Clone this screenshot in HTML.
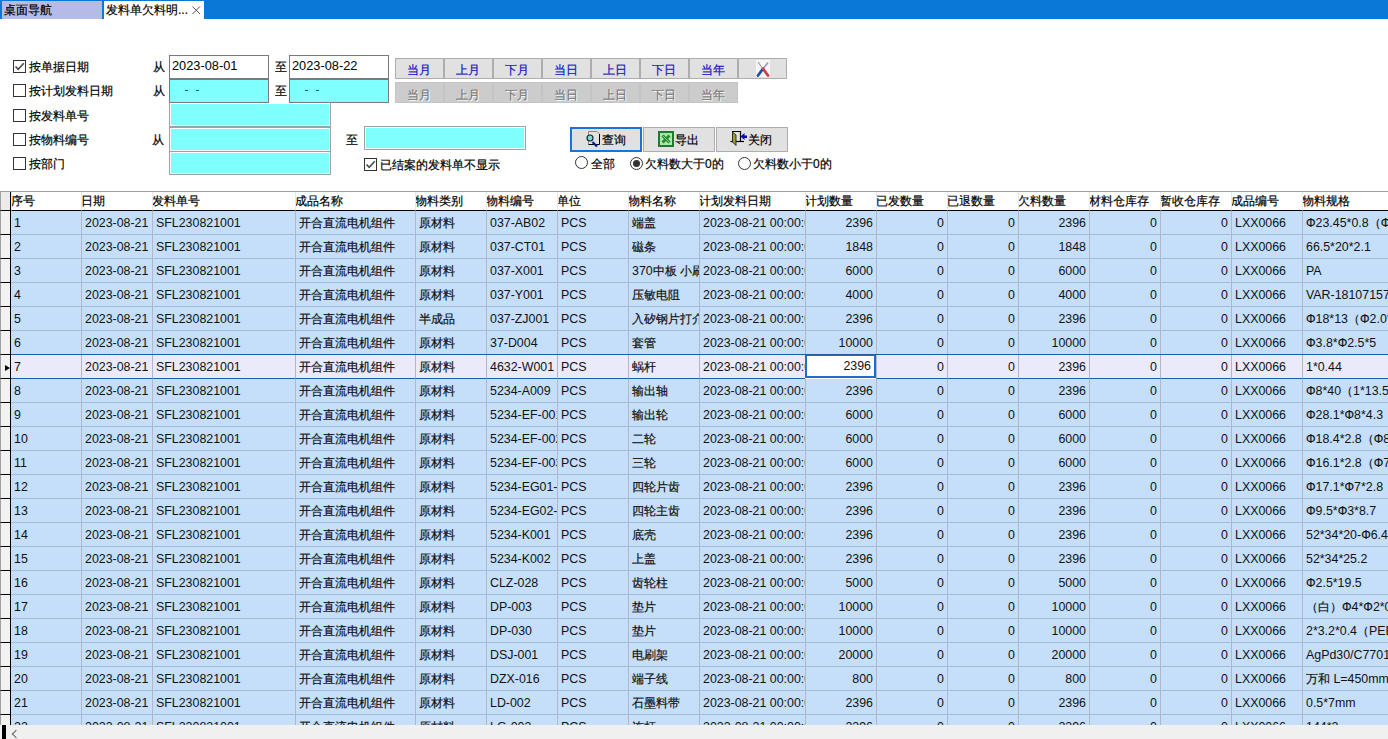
<!DOCTYPE html><html><head><meta charset="utf-8"><style>*{box-sizing:border-box;margin:0;padding:0}
html,body{width:1388px;height:739px;overflow:hidden;background:#fff;font-family:"Liberation Sans",sans-serif;font-size:12px;color:#000;-webkit-text-stroke-width:0.2px}
.abs{position:absolute}
#tabs{position:absolute;left:0;top:0;width:1388px;height:19px;background:#0a78d6}
.tab{position:absolute;top:1px;height:18px;line-height:18px;padding-left:2px;white-space:nowrap;font-size:12px}
#t1{left:2px;width:100px;background:#b3bbe6}
#t2{left:104px;width:100px;background:#fff}
.cb{position:absolute;width:13px;height:13px;border:1px solid #333;background:#fff}
.lbl{position:absolute;font-size:12px;line-height:14px;white-space:nowrap}
.inp{-webkit-text-stroke-width:0;position:absolute;border:1px solid #7a7a7a;background:#80ffff;font-size:12.8px;line-height:20px;padding-left:2px}
.dash{position:absolute;top:90px;width:3px;height:1px;background:#006868}
.inp.w{background:#fff}
.inp.l{border-color:#9aa4a8;box-shadow:inset 0 0 0 1px #f4ffff}
.btn{position:absolute;top:58px;width:49px;height:21px;background:#e1e1e1;border:1px solid #adadad;color:#1414c4;text-align:center;line-height:20px;font-size:12px;padding-top:1px;text-indent:-1px}
.btn.d{top:82px;background:#cccccc;border-color:#c4c4c4;color:#7a7a7a;text-shadow:1px 1px 0 #fff;padding-top:2px}
.bb{position:absolute;top:127px;height:25px;background:#e1e1e1;border:1px solid #adadad;font-size:12px}
.rad{position:absolute;width:13px;height:13px;border:1px solid #333;border-radius:50%;background:#fff}
#grid{position:absolute;left:0;top:191px;width:1388px;height:534px;overflow:hidden;border-top:1px solid #a0a0a0}
.cb svg{position:absolute;left:0;top:0}
.x{position:absolute;left:86px;top:0;font-size:15px;color:#444}
.ic{position:absolute}
.bt{position:absolute;line-height:14px;white-space:nowrap}
#grid{position:absolute;left:0;top:0;width:1388px;height:725px;overflow:hidden;border:0}
#gtop{position:absolute;left:0;top:191px;width:1388px;height:1px;background:#a0a0a0}
.ind{position:absolute;left:0;width:11px}
.hc{position:absolute;top:192px;height:19px;border-bottom:1px solid #000;border-left:1px solid #e8e8e8;background:#fff;padding-left:0;text-indent:-1px;line-height:18px;white-space:nowrap;overflow:hidden}
.row{position:absolute;left:0;width:1420px;height:24px}
.c{position:absolute;top:0;height:24px;border-left:1px solid #b0b8c8;border-bottom:1px solid #a5bacd;background:#c5dffa;padding-left:3px;padding-top:1px;line-height:23px;white-space:nowrap;overflow:hidden;font-size:12px;color:#111}
.a{font-size:12.4px;-webkit-text-stroke-width:0}
.c.r{text-align:right;padding-right:3px;padding-left:0}
.cur .c{background:#eaeafa;border-bottom-color:#1d5e9e}
.c.sel{background:#fff}
#hs{position:absolute;left:0;top:725px;width:1388px;height:14px;background:#f0f0f0}
#hs .bar{position:absolute;left:2px;top:0;width:4px;height:14px;background:#000}
.indh{position:absolute;left:0;top:192px;width:11px;height:19px;background:#ebebeb;border-left:1px solid #a0a0a0;border-right:1px solid #000;border-bottom:1px solid #000}
.indr{position:absolute;left:0;width:11px;height:24px;background:#f2f2f2;border-left:1px solid #a0a0a0;border-right:1px solid #000;border-bottom:1px solid #000}
.tri{position:absolute;left:4px;top:10px;width:0;height:0;border-top:3.5px solid transparent;border-bottom:3.5px solid transparent;border-left:5px solid #000}
.row .c:first-child{border-left:0}
.sel{border:2px solid #1a6fd0 !important;padding-top:0;padding-right:1px;line-height:20px;top:-1px;height:24px}
.curtop{position:absolute;left:11px;top:-1px;width:1409px;height:1px;background:#1d5e9e}
#hs .arr{position:absolute;left:13px;top:6px;width:6px;height:6px;border-left:1.6px solid #606060;border-bottom:1.6px solid #606060;transform:rotate(45deg);transform-origin:center}
</style></head><body>
<div id="tabs"><div class="tab" id="t1">桌面导航</div><div class="tab" id="t2">发料单欠料明...<svg style="position:absolute;left:88px;top:5px" width="10" height="10" viewBox="0 0 10 10"><path d="M0.5 0.5 L8 8 M8 0.5 L0.5 8" stroke="#555" stroke-width="1"/></svg></div></div>
<div class="cb" style="left:13px;top:60px"><svg width="11" height="11" viewBox="0 0 11 11"><path d="M1.5 5.5 L4.2 8.3 L9.8 2.2" fill="none" stroke="#4a4a4a" stroke-width="1.6"/></svg></div>
<div class="lbl" style="left:29px;top:60px">按单据日期</div>
<div class="cb" style="left:13px;top:84px"></div>
<div class="lbl" style="left:29px;top:84px">按计划发料日期</div>
<div class="cb" style="left:13px;top:109px"></div>
<div class="lbl" style="left:29px;top:109px">按发料单号</div>
<div class="cb" style="left:13px;top:133px"></div>
<div class="lbl" style="left:29px;top:133px">按物料编号</div>
<div class="cb" style="left:13px;top:157px"></div>
<div class="lbl" style="left:29px;top:157px">按部门</div>
<div class="lbl" style="left:153px;top:60px">从</div>
<div class="lbl" style="left:153px;top:84px">从</div>
<div class="lbl" style="left:152px;top:133px">从</div>
<div class="lbl" style="left:275px;top:60px">至</div>
<div class="lbl" style="left:275px;top:84px">至</div>
<div class="lbl" style="left:346px;top:133px">至</div>
<div class="inp w" style="left:169px;top:55px;width:100px;height:24px">2023-08-01</div>
<div class="inp w" style="left:289px;top:55px;width:100px;height:24px">2023-08-22</div>
<div class="inp" style="left:169px;top:79px;width:100px;height:24px"></div><div class="dash" style="left:185px"></div><div class="dash" style="left:196px"></div>
<div class="inp" style="left:289px;top:79px;width:100px;height:24px"></div><div class="dash" style="left:305px"></div><div class="dash" style="left:316px"></div>
<div class="inp l" style="left:169px;top:102px;width:162px;height:25px;border-top-color:transparent;background-clip:padding-box"></div>
<div class="inp l" style="left:169px;top:127px;width:162px;height:25px"></div>
<div class="inp l" style="left:364px;top:126px;width:162px;height:24px"></div>
<div class="inp l" style="left:169px;top:151px;width:162px;height:24px"></div>
<div class="btn" style="left:395px">当月</div>
<div class="btn" style="left:444px">上月</div>
<div class="btn" style="left:493px">下月</div>
<div class="btn" style="left:542px">当日</div>
<div class="btn" style="left:591px">上日</div>
<div class="btn" style="left:640px">下日</div>
<div class="btn" style="left:689px">当年</div>
<div class="btn" style="left:738px"><svg style="position:absolute;left:17px;top:0px" width="14" height="18" viewBox="0 0 14 18"><rect x="0" y="1" width="14" height="17" fill="#f6f6f6"/><path d="M2 3 L7 10" stroke="#a89098" stroke-width="1.1"/><path d="M12 3.5 L7 10" stroke="#a898c8" stroke-width="1.8"/><path d="M6.8 10 L2 16.5" stroke="#1a4fae" stroke-width="2.8" stroke-linecap="round"/><path d="M7.2 10 L12 16.5" stroke="#d03a4a" stroke-width="2.8" stroke-linecap="round"/></svg></div>
<div class="btn d" style="left:395px">当月</div>
<div class="btn d" style="left:444px">上月</div>
<div class="btn d" style="left:493px">下月</div>
<div class="btn d" style="left:542px">当日</div>
<div class="btn d" style="left:591px">上日</div>
<div class="btn d" style="left:640px">下日</div>
<div class="btn d" style="left:689px">当年</div>
<div class="bb" style="left:570px;width:72px;border:2px solid #1a73d6"><svg class="ic" style="left:14px;top:2px" width="16" height="18" viewBox="0 0 16 18"><path d="M2.5 13.5 V0.5 H11 L13.5 3" fill="none" stroke="#888" stroke-width="1"/><path d="M13.5 3 V13.5 H2.5" fill="none" stroke="#000" stroke-width="1"/><path d="M6.5 11 L11 15.5" stroke="#0a1a90" stroke-width="2.2"/><circle cx="4" cy="7" r="3" fill="#78dcc8" stroke="#123" stroke-width="1.1"/></svg><span class="bt" style="left:30px;top:4px">查询</span></div>
<div class="bb" style="left:643px;width:72px"><svg class="ic" style="left:14px;top:3px" width="17" height="17" viewBox="0 0 17 17"><rect x="1" y="1" width="14" height="14" fill="#a8e8a8" stroke="#1f7a2f" stroke-width="2"/><path d="M4.5 4.5 L11.5 11.5 M11.5 4.5 L4.5 11.5" stroke="#2a8a38" stroke-width="3"/><path d="M5 5 L11 11" stroke="#90e890" stroke-width="0.8"/></svg><span class="bt" style="left:31px;top:5px">导出</span></div>
<div class="bb" style="left:716px;width:72px"><svg class="ic" style="left:13px;top:2px" width="18" height="17" viewBox="0 0 18 17"><path d="M2 1.5 H10.5 V11.5" fill="none" stroke="#000" stroke-width="1.2"/><path d="M0.5 11.5 H14" stroke="#000" stroke-width="1.2"/><path d="M2.5 2 L6 5 V15.5 L2.5 12 Z" fill="#a09a30" stroke="#222" stroke-width="0.9"/><path d="M10.5 6.5 L14.5 3 V5.5 H17 V8 H14.5 V10 Z" fill="#0a10b0"/></svg><span class="bt" style="left:31px;top:5px">关闭</span></div>
<div class="rad" style="left:575px;top:156px"></div>
<div class="lbl" style="left:591px;top:157px">全部</div>
<div class="rad" style="left:630px;top:157px"><div style="position:absolute;left:2px;top:2px;width:7px;height:7px;border-radius:50%;background:#333"></div></div>
<div class="lbl" style="left:645px;top:157px">欠料数大于0的</div>
<div class="rad" style="left:738px;top:157px"></div>
<div class="lbl" style="left:753px;top:157px">欠料数小于0的</div>
<div class="cb" style="left:364px;top:158px"><svg width="11" height="11" viewBox="0 0 11 11"><path d="M1.5 5.5 L4.2 8.3 L9.8 2.2" fill="none" stroke="#4a4a4a" stroke-width="1.6"/></svg></div>
<div class="lbl" style="left:380px;top:158px">已结案的发料单不显示</div>

<div id="grid"><div id="gtop"></div><div class="indh"></div><div class="indr" style="top:211px"></div><div class="indr" style="top:235px"></div><div class="indr" style="top:259px"></div><div class="indr" style="top:283px"></div><div class="indr" style="top:307px"></div><div class="indr" style="top:331px"></div><div class="indr" style="top:355px"><div class="tri"></div></div><div class="indr" style="top:379px"></div><div class="indr" style="top:403px"></div><div class="indr" style="top:427px"></div><div class="indr" style="top:451px"></div><div class="indr" style="top:475px"></div><div class="indr" style="top:499px"></div><div class="indr" style="top:523px"></div><div class="indr" style="top:547px"></div><div class="indr" style="top:571px"></div><div class="indr" style="top:595px"></div><div class="indr" style="top:619px"></div><div class="indr" style="top:643px"></div><div class="indr" style="top:667px"></div><div class="indr" style="top:691px"></div><div class="indr" style="top:715px"></div><div class="hc" style="left:11px;width:70px">序号</div><div class="hc" style="left:81px;width:71px">日期</div><div class="hc" style="left:152px;width:143px">发料单号</div><div class="hc" style="left:295px;width:120px">成品名称</div><div class="hc" style="left:415px;width:71px">物料类别</div><div class="hc" style="left:486px;width:71px">物料编号</div><div class="hc" style="left:557px;width:71px">单位</div><div class="hc" style="left:628px;width:71px">物料名称</div><div class="hc" style="left:699px;width:106px">计划发料日期</div><div class="hc" style="left:805px;width:71px">计划数量</div><div class="hc" style="left:876px;width:71px">已发数量</div><div class="hc" style="left:947px;width:71px">已退数量</div><div class="hc" style="left:1018px;width:71px">欠料数量</div><div class="hc" style="left:1089px;width:71px">材料仓库存</div><div class="hc" style="left:1160px;width:71px">暂收仓库存</div><div class="hc" style="left:1231px;width:71px">成品编号</div><div class="hc" style="left:1302px;width:118px">物料规格</div><div class="row" style="top:211px"><div class="c" style="left:11px;width:70px"><span class="a">1</span></div><div class="c" style="left:81px;width:71px"><span class="a">2023-08-21</span></div><div class="c" style="left:152px;width:143px"><span class="a">SFL230821001</span></div><div class="c" style="left:295px;width:120px">开合直流电机组件</div><div class="c" style="left:415px;width:71px">原材料</div><div class="c" style="left:486px;width:71px"><span class="a">037-AB02</span></div><div class="c" style="left:557px;width:71px"><span class="a">PCS</span></div><div class="c" style="left:628px;width:71px">端盖</div><div class="c" style="left:699px;width:106px"><span class="a">2023-08-21 00:00:00</span></div><div class="c r" style="left:805px;width:71px"><span class="a">2396</span></div><div class="c r" style="left:876px;width:71px"><span class="a">0</span></div><div class="c r" style="left:947px;width:71px"><span class="a">0</span></div><div class="c r" style="left:1018px;width:71px"><span class="a">2396</span></div><div class="c r" style="left:1089px;width:71px"><span class="a">0</span></div><div class="c r" style="left:1160px;width:71px"><span class="a">0</span></div><div class="c" style="left:1231px;width:71px"><span class="a">LXX0066</span></div><div class="c" style="left:1302px;width:118px">Φ<span class="a">23.45*0.8</span>（Φ<span class="a">23.45*0.8</span>）</div></div><div class="row" style="top:235px"><div class="c" style="left:11px;width:70px"><span class="a">2</span></div><div class="c" style="left:81px;width:71px"><span class="a">2023-08-21</span></div><div class="c" style="left:152px;width:143px"><span class="a">SFL230821001</span></div><div class="c" style="left:295px;width:120px">开合直流电机组件</div><div class="c" style="left:415px;width:71px">原材料</div><div class="c" style="left:486px;width:71px"><span class="a">037-CT01</span></div><div class="c" style="left:557px;width:71px"><span class="a">PCS</span></div><div class="c" style="left:628px;width:71px">磁条</div><div class="c" style="left:699px;width:106px"><span class="a">2023-08-21 00:00:00</span></div><div class="c r" style="left:805px;width:71px"><span class="a">1848</span></div><div class="c r" style="left:876px;width:71px"><span class="a">0</span></div><div class="c r" style="left:947px;width:71px"><span class="a">0</span></div><div class="c r" style="left:1018px;width:71px"><span class="a">1848</span></div><div class="c r" style="left:1089px;width:71px"><span class="a">0</span></div><div class="c r" style="left:1160px;width:71px"><span class="a">0</span></div><div class="c" style="left:1231px;width:71px"><span class="a">LXX0066</span></div><div class="c" style="left:1302px;width:118px"><span class="a">66.5*20*2.1</span></div></div><div class="row" style="top:259px"><div class="c" style="left:11px;width:70px"><span class="a">3</span></div><div class="c" style="left:81px;width:71px"><span class="a">2023-08-21</span></div><div class="c" style="left:152px;width:143px"><span class="a">SFL230821001</span></div><div class="c" style="left:295px;width:120px">开合直流电机组件</div><div class="c" style="left:415px;width:71px">原材料</div><div class="c" style="left:486px;width:71px"><span class="a">037-X001</span></div><div class="c" style="left:557px;width:71px"><span class="a">PCS</span></div><div class="c" style="left:628px;width:71px"><span class="a">370</span>中板<span class="a"> </span>小刷架</div><div class="c" style="left:699px;width:106px"><span class="a">2023-08-21 00:00:00</span></div><div class="c r" style="left:805px;width:71px"><span class="a">6000</span></div><div class="c r" style="left:876px;width:71px"><span class="a">0</span></div><div class="c r" style="left:947px;width:71px"><span class="a">0</span></div><div class="c r" style="left:1018px;width:71px"><span class="a">6000</span></div><div class="c r" style="left:1089px;width:71px"><span class="a">0</span></div><div class="c r" style="left:1160px;width:71px"><span class="a">0</span></div><div class="c" style="left:1231px;width:71px"><span class="a">LXX0066</span></div><div class="c" style="left:1302px;width:118px"><span class="a">PA</span></div></div><div class="row" style="top:283px"><div class="c" style="left:11px;width:70px"><span class="a">4</span></div><div class="c" style="left:81px;width:71px"><span class="a">2023-08-21</span></div><div class="c" style="left:152px;width:143px"><span class="a">SFL230821001</span></div><div class="c" style="left:295px;width:120px">开合直流电机组件</div><div class="c" style="left:415px;width:71px">原材料</div><div class="c" style="left:486px;width:71px"><span class="a">037-Y001</span></div><div class="c" style="left:557px;width:71px"><span class="a">PCS</span></div><div class="c" style="left:628px;width:71px">压敏电阻</div><div class="c" style="left:699px;width:106px"><span class="a">2023-08-21 00:00:00</span></div><div class="c r" style="left:805px;width:71px"><span class="a">4000</span></div><div class="c r" style="left:876px;width:71px"><span class="a">0</span></div><div class="c r" style="left:947px;width:71px"><span class="a">0</span></div><div class="c r" style="left:1018px;width:71px"><span class="a">4000</span></div><div class="c r" style="left:1089px;width:71px"><span class="a">0</span></div><div class="c r" style="left:1160px;width:71px"><span class="a">0</span></div><div class="c" style="left:1231px;width:71px"><span class="a">LXX0066</span></div><div class="c" style="left:1302px;width:118px"><span class="a">VAR-18107157</span></div></div><div class="row" style="top:307px"><div class="c" style="left:11px;width:70px"><span class="a">5</span></div><div class="c" style="left:81px;width:71px"><span class="a">2023-08-21</span></div><div class="c" style="left:152px;width:143px"><span class="a">SFL230821001</span></div><div class="c" style="left:295px;width:120px">开合直流电机组件</div><div class="c" style="left:415px;width:71px">半成品</div><div class="c" style="left:486px;width:71px"><span class="a">037-ZJ001</span></div><div class="c" style="left:557px;width:71px"><span class="a">PCS</span></div><div class="c" style="left:628px;width:71px">入矽钢片打介子</div><div class="c" style="left:699px;width:106px"><span class="a">2023-08-21 00:00:00</span></div><div class="c r" style="left:805px;width:71px"><span class="a">2396</span></div><div class="c r" style="left:876px;width:71px"><span class="a">0</span></div><div class="c r" style="left:947px;width:71px"><span class="a">0</span></div><div class="c r" style="left:1018px;width:71px"><span class="a">2396</span></div><div class="c r" style="left:1089px;width:71px"><span class="a">0</span></div><div class="c r" style="left:1160px;width:71px"><span class="a">0</span></div><div class="c" style="left:1231px;width:71px"><span class="a">LXX0066</span></div><div class="c" style="left:1302px;width:118px">Φ<span class="a">18*13</span>（Φ<span class="a">2.0*4</span>）</div></div><div class="row" style="top:331px"><div class="c" style="left:11px;width:70px"><span class="a">6</span></div><div class="c" style="left:81px;width:71px"><span class="a">2023-08-21</span></div><div class="c" style="left:152px;width:143px"><span class="a">SFL230821001</span></div><div class="c" style="left:295px;width:120px">开合直流电机组件</div><div class="c" style="left:415px;width:71px">原材料</div><div class="c" style="left:486px;width:71px"><span class="a">37-D004</span></div><div class="c" style="left:557px;width:71px"><span class="a">PCS</span></div><div class="c" style="left:628px;width:71px">套管</div><div class="c" style="left:699px;width:106px"><span class="a">2023-08-21 00:00:00</span></div><div class="c r" style="left:805px;width:71px"><span class="a">10000</span></div><div class="c r" style="left:876px;width:71px"><span class="a">0</span></div><div class="c r" style="left:947px;width:71px"><span class="a">0</span></div><div class="c r" style="left:1018px;width:71px"><span class="a">10000</span></div><div class="c r" style="left:1089px;width:71px"><span class="a">0</span></div><div class="c r" style="left:1160px;width:71px"><span class="a">0</span></div><div class="c" style="left:1231px;width:71px"><span class="a">LXX0066</span></div><div class="c" style="left:1302px;width:118px">Φ<span class="a">3.8*</span>Φ<span class="a">2.5*5</span></div></div><div class="row cur" style="top:355px"><div class="c" style="left:11px;width:70px"><span class="a">7</span></div><div class="c" style="left:81px;width:71px"><span class="a">2023-08-21</span></div><div class="c" style="left:152px;width:143px"><span class="a">SFL230821001</span></div><div class="c" style="left:295px;width:120px">开合直流电机组件</div><div class="c" style="left:415px;width:71px">原材料</div><div class="c" style="left:486px;width:71px"><span class="a">4632-W001</span></div><div class="c" style="left:557px;width:71px"><span class="a">PCS</span></div><div class="c" style="left:628px;width:71px">蜗杆</div><div class="c" style="left:699px;width:106px"><span class="a">2023-08-21 00:00:00</span></div><div class="c r sel" style="left:805px;width:71px"><span class="a">2396</span></div><div class="c r" style="left:876px;width:71px"><span class="a">0</span></div><div class="c r" style="left:947px;width:71px"><span class="a">0</span></div><div class="c r" style="left:1018px;width:71px"><span class="a">2396</span></div><div class="c r" style="left:1089px;width:71px"><span class="a">0</span></div><div class="c r" style="left:1160px;width:71px"><span class="a">0</span></div><div class="c" style="left:1231px;width:71px"><span class="a">LXX0066</span></div><div class="c" style="left:1302px;width:118px"><span class="a">1*0.44</span></div><div class="curtop"></div></div><div class="row" style="top:379px"><div class="c" style="left:11px;width:70px"><span class="a">8</span></div><div class="c" style="left:81px;width:71px"><span class="a">2023-08-21</span></div><div class="c" style="left:152px;width:143px"><span class="a">SFL230821001</span></div><div class="c" style="left:295px;width:120px">开合直流电机组件</div><div class="c" style="left:415px;width:71px">原材料</div><div class="c" style="left:486px;width:71px"><span class="a">5234-A009</span></div><div class="c" style="left:557px;width:71px"><span class="a">PCS</span></div><div class="c" style="left:628px;width:71px">输出轴</div><div class="c" style="left:699px;width:106px"><span class="a">2023-08-21 00:00:00</span></div><div class="c r" style="left:805px;width:71px"><span class="a">2396</span></div><div class="c r" style="left:876px;width:71px"><span class="a">0</span></div><div class="c r" style="left:947px;width:71px"><span class="a">0</span></div><div class="c r" style="left:1018px;width:71px"><span class="a">2396</span></div><div class="c r" style="left:1089px;width:71px"><span class="a">0</span></div><div class="c r" style="left:1160px;width:71px"><span class="a">0</span></div><div class="c" style="left:1231px;width:71px"><span class="a">LXX0066</span></div><div class="c" style="left:1302px;width:118px">Φ<span class="a">8*40</span>（<span class="a">1*13.5</span>）</div></div><div class="row" style="top:403px"><div class="c" style="left:11px;width:70px"><span class="a">9</span></div><div class="c" style="left:81px;width:71px"><span class="a">2023-08-21</span></div><div class="c" style="left:152px;width:143px"><span class="a">SFL230821001</span></div><div class="c" style="left:295px;width:120px">开合直流电机组件</div><div class="c" style="left:415px;width:71px">原材料</div><div class="c" style="left:486px;width:71px"><span class="a">5234-EF-001</span></div><div class="c" style="left:557px;width:71px"><span class="a">PCS</span></div><div class="c" style="left:628px;width:71px">输出轮</div><div class="c" style="left:699px;width:106px"><span class="a">2023-08-21 00:00:00</span></div><div class="c r" style="left:805px;width:71px"><span class="a">6000</span></div><div class="c r" style="left:876px;width:71px"><span class="a">0</span></div><div class="c r" style="left:947px;width:71px"><span class="a">0</span></div><div class="c r" style="left:1018px;width:71px"><span class="a">6000</span></div><div class="c r" style="left:1089px;width:71px"><span class="a">0</span></div><div class="c r" style="left:1160px;width:71px"><span class="a">0</span></div><div class="c" style="left:1231px;width:71px"><span class="a">LXX0066</span></div><div class="c" style="left:1302px;width:118px">Φ<span class="a">28.1*</span>Φ<span class="a">8*4.3</span></div></div><div class="row" style="top:427px"><div class="c" style="left:11px;width:70px"><span class="a">10</span></div><div class="c" style="left:81px;width:71px"><span class="a">2023-08-21</span></div><div class="c" style="left:152px;width:143px"><span class="a">SFL230821001</span></div><div class="c" style="left:295px;width:120px">开合直流电机组件</div><div class="c" style="left:415px;width:71px">原材料</div><div class="c" style="left:486px;width:71px"><span class="a">5234-EF-002</span></div><div class="c" style="left:557px;width:71px"><span class="a">PCS</span></div><div class="c" style="left:628px;width:71px">二轮</div><div class="c" style="left:699px;width:106px"><span class="a">2023-08-21 00:00:00</span></div><div class="c r" style="left:805px;width:71px"><span class="a">6000</span></div><div class="c r" style="left:876px;width:71px"><span class="a">0</span></div><div class="c r" style="left:947px;width:71px"><span class="a">0</span></div><div class="c r" style="left:1018px;width:71px"><span class="a">6000</span></div><div class="c r" style="left:1089px;width:71px"><span class="a">0</span></div><div class="c r" style="left:1160px;width:71px"><span class="a">0</span></div><div class="c" style="left:1231px;width:71px"><span class="a">LXX0066</span></div><div class="c" style="left:1302px;width:118px">Φ<span class="a">18.4*2.8</span>（Φ<span class="a">8</span>）</div></div><div class="row" style="top:451px"><div class="c" style="left:11px;width:70px"><span class="a">11</span></div><div class="c" style="left:81px;width:71px"><span class="a">2023-08-21</span></div><div class="c" style="left:152px;width:143px"><span class="a">SFL230821001</span></div><div class="c" style="left:295px;width:120px">开合直流电机组件</div><div class="c" style="left:415px;width:71px">原材料</div><div class="c" style="left:486px;width:71px"><span class="a">5234-EF-003</span></div><div class="c" style="left:557px;width:71px"><span class="a">PCS</span></div><div class="c" style="left:628px;width:71px">三轮</div><div class="c" style="left:699px;width:106px"><span class="a">2023-08-21 00:00:00</span></div><div class="c r" style="left:805px;width:71px"><span class="a">6000</span></div><div class="c r" style="left:876px;width:71px"><span class="a">0</span></div><div class="c r" style="left:947px;width:71px"><span class="a">0</span></div><div class="c r" style="left:1018px;width:71px"><span class="a">6000</span></div><div class="c r" style="left:1089px;width:71px"><span class="a">0</span></div><div class="c r" style="left:1160px;width:71px"><span class="a">0</span></div><div class="c" style="left:1231px;width:71px"><span class="a">LXX0066</span></div><div class="c" style="left:1302px;width:118px">Φ<span class="a">16.1*2.8</span>（Φ<span class="a">7</span>）</div></div><div class="row" style="top:475px"><div class="c" style="left:11px;width:70px"><span class="a">12</span></div><div class="c" style="left:81px;width:71px"><span class="a">2023-08-21</span></div><div class="c" style="left:152px;width:143px"><span class="a">SFL230821001</span></div><div class="c" style="left:295px;width:120px">开合直流电机组件</div><div class="c" style="left:415px;width:71px">原材料</div><div class="c" style="left:486px;width:71px"><span class="a">5234-EG01-01</span></div><div class="c" style="left:557px;width:71px"><span class="a">PCS</span></div><div class="c" style="left:628px;width:71px">四轮片齿</div><div class="c" style="left:699px;width:106px"><span class="a">2023-08-21 00:00:00</span></div><div class="c r" style="left:805px;width:71px"><span class="a">2396</span></div><div class="c r" style="left:876px;width:71px"><span class="a">0</span></div><div class="c r" style="left:947px;width:71px"><span class="a">0</span></div><div class="c r" style="left:1018px;width:71px"><span class="a">2396</span></div><div class="c r" style="left:1089px;width:71px"><span class="a">0</span></div><div class="c r" style="left:1160px;width:71px"><span class="a">0</span></div><div class="c" style="left:1231px;width:71px"><span class="a">LXX0066</span></div><div class="c" style="left:1302px;width:118px">Φ<span class="a">17.1*</span>Φ<span class="a">7*2.8</span></div></div><div class="row" style="top:499px"><div class="c" style="left:11px;width:70px"><span class="a">13</span></div><div class="c" style="left:81px;width:71px"><span class="a">2023-08-21</span></div><div class="c" style="left:152px;width:143px"><span class="a">SFL230821001</span></div><div class="c" style="left:295px;width:120px">开合直流电机组件</div><div class="c" style="left:415px;width:71px">原材料</div><div class="c" style="left:486px;width:71px"><span class="a">5234-EG02-01</span></div><div class="c" style="left:557px;width:71px"><span class="a">PCS</span></div><div class="c" style="left:628px;width:71px">四轮主齿</div><div class="c" style="left:699px;width:106px"><span class="a">2023-08-21 00:00:00</span></div><div class="c r" style="left:805px;width:71px"><span class="a">2396</span></div><div class="c r" style="left:876px;width:71px"><span class="a">0</span></div><div class="c r" style="left:947px;width:71px"><span class="a">0</span></div><div class="c r" style="left:1018px;width:71px"><span class="a">2396</span></div><div class="c r" style="left:1089px;width:71px"><span class="a">0</span></div><div class="c r" style="left:1160px;width:71px"><span class="a">0</span></div><div class="c" style="left:1231px;width:71px"><span class="a">LXX0066</span></div><div class="c" style="left:1302px;width:118px">Φ<span class="a">9.5*</span>Φ<span class="a">3*8.7</span></div></div><div class="row" style="top:523px"><div class="c" style="left:11px;width:70px"><span class="a">14</span></div><div class="c" style="left:81px;width:71px"><span class="a">2023-08-21</span></div><div class="c" style="left:152px;width:143px"><span class="a">SFL230821001</span></div><div class="c" style="left:295px;width:120px">开合直流电机组件</div><div class="c" style="left:415px;width:71px">原材料</div><div class="c" style="left:486px;width:71px"><span class="a">5234-K001</span></div><div class="c" style="left:557px;width:71px"><span class="a">PCS</span></div><div class="c" style="left:628px;width:71px">底壳</div><div class="c" style="left:699px;width:106px"><span class="a">2023-08-21 00:00:00</span></div><div class="c r" style="left:805px;width:71px"><span class="a">2396</span></div><div class="c r" style="left:876px;width:71px"><span class="a">0</span></div><div class="c r" style="left:947px;width:71px"><span class="a">0</span></div><div class="c r" style="left:1018px;width:71px"><span class="a">2396</span></div><div class="c r" style="left:1089px;width:71px"><span class="a">0</span></div><div class="c r" style="left:1160px;width:71px"><span class="a">0</span></div><div class="c" style="left:1231px;width:71px"><span class="a">LXX0066</span></div><div class="c" style="left:1302px;width:118px"><span class="a">52*34*20-</span>Φ<span class="a">6.4</span></div></div><div class="row" style="top:547px"><div class="c" style="left:11px;width:70px"><span class="a">15</span></div><div class="c" style="left:81px;width:71px"><span class="a">2023-08-21</span></div><div class="c" style="left:152px;width:143px"><span class="a">SFL230821001</span></div><div class="c" style="left:295px;width:120px">开合直流电机组件</div><div class="c" style="left:415px;width:71px">原材料</div><div class="c" style="left:486px;width:71px"><span class="a">5234-K002</span></div><div class="c" style="left:557px;width:71px"><span class="a">PCS</span></div><div class="c" style="left:628px;width:71px">上盖</div><div class="c" style="left:699px;width:106px"><span class="a">2023-08-21 00:00:00</span></div><div class="c r" style="left:805px;width:71px"><span class="a">2396</span></div><div class="c r" style="left:876px;width:71px"><span class="a">0</span></div><div class="c r" style="left:947px;width:71px"><span class="a">0</span></div><div class="c r" style="left:1018px;width:71px"><span class="a">2396</span></div><div class="c r" style="left:1089px;width:71px"><span class="a">0</span></div><div class="c r" style="left:1160px;width:71px"><span class="a">0</span></div><div class="c" style="left:1231px;width:71px"><span class="a">LXX0066</span></div><div class="c" style="left:1302px;width:118px"><span class="a">52*34*25.2</span></div></div><div class="row" style="top:571px"><div class="c" style="left:11px;width:70px"><span class="a">16</span></div><div class="c" style="left:81px;width:71px"><span class="a">2023-08-21</span></div><div class="c" style="left:152px;width:143px"><span class="a">SFL230821001</span></div><div class="c" style="left:295px;width:120px">开合直流电机组件</div><div class="c" style="left:415px;width:71px">原材料</div><div class="c" style="left:486px;width:71px"><span class="a">CLZ-028</span></div><div class="c" style="left:557px;width:71px"><span class="a">PCS</span></div><div class="c" style="left:628px;width:71px">齿轮柱</div><div class="c" style="left:699px;width:106px"><span class="a">2023-08-21 00:00:00</span></div><div class="c r" style="left:805px;width:71px"><span class="a">5000</span></div><div class="c r" style="left:876px;width:71px"><span class="a">0</span></div><div class="c r" style="left:947px;width:71px"><span class="a">0</span></div><div class="c r" style="left:1018px;width:71px"><span class="a">5000</span></div><div class="c r" style="left:1089px;width:71px"><span class="a">0</span></div><div class="c r" style="left:1160px;width:71px"><span class="a">0</span></div><div class="c" style="left:1231px;width:71px"><span class="a">LXX0066</span></div><div class="c" style="left:1302px;width:118px">Φ<span class="a">2.5*19.5</span></div></div><div class="row" style="top:595px"><div class="c" style="left:11px;width:70px"><span class="a">17</span></div><div class="c" style="left:81px;width:71px"><span class="a">2023-08-21</span></div><div class="c" style="left:152px;width:143px"><span class="a">SFL230821001</span></div><div class="c" style="left:295px;width:120px">开合直流电机组件</div><div class="c" style="left:415px;width:71px">原材料</div><div class="c" style="left:486px;width:71px"><span class="a">DP-003</span></div><div class="c" style="left:557px;width:71px"><span class="a">PCS</span></div><div class="c" style="left:628px;width:71px">垫片</div><div class="c" style="left:699px;width:106px"><span class="a">2023-08-21 00:00:00</span></div><div class="c r" style="left:805px;width:71px"><span class="a">10000</span></div><div class="c r" style="left:876px;width:71px"><span class="a">0</span></div><div class="c r" style="left:947px;width:71px"><span class="a">0</span></div><div class="c r" style="left:1018px;width:71px"><span class="a">10000</span></div><div class="c r" style="left:1089px;width:71px"><span class="a">0</span></div><div class="c r" style="left:1160px;width:71px"><span class="a">0</span></div><div class="c" style="left:1231px;width:71px"><span class="a">LXX0066</span></div><div class="c" style="left:1302px;width:118px">（白）Φ<span class="a">4*</span>Φ<span class="a">2*0.5</span></div></div><div class="row" style="top:619px"><div class="c" style="left:11px;width:70px"><span class="a">18</span></div><div class="c" style="left:81px;width:71px"><span class="a">2023-08-21</span></div><div class="c" style="left:152px;width:143px"><span class="a">SFL230821001</span></div><div class="c" style="left:295px;width:120px">开合直流电机组件</div><div class="c" style="left:415px;width:71px">原材料</div><div class="c" style="left:486px;width:71px"><span class="a">DP-030</span></div><div class="c" style="left:557px;width:71px"><span class="a">PCS</span></div><div class="c" style="left:628px;width:71px">垫片</div><div class="c" style="left:699px;width:106px"><span class="a">2023-08-21 00:00:00</span></div><div class="c r" style="left:805px;width:71px"><span class="a">10000</span></div><div class="c r" style="left:876px;width:71px"><span class="a">0</span></div><div class="c r" style="left:947px;width:71px"><span class="a">0</span></div><div class="c r" style="left:1018px;width:71px"><span class="a">10000</span></div><div class="c r" style="left:1089px;width:71px"><span class="a">0</span></div><div class="c r" style="left:1160px;width:71px"><span class="a">0</span></div><div class="c" style="left:1231px;width:71px"><span class="a">LXX0066</span></div><div class="c" style="left:1302px;width:118px"><span class="a">2*3.2*0.4</span>（<span class="a">PEEK</span>）</div></div><div class="row" style="top:643px"><div class="c" style="left:11px;width:70px"><span class="a">19</span></div><div class="c" style="left:81px;width:71px"><span class="a">2023-08-21</span></div><div class="c" style="left:152px;width:143px"><span class="a">SFL230821001</span></div><div class="c" style="left:295px;width:120px">开合直流电机组件</div><div class="c" style="left:415px;width:71px">原材料</div><div class="c" style="left:486px;width:71px"><span class="a">DSJ-001</span></div><div class="c" style="left:557px;width:71px"><span class="a">PCS</span></div><div class="c" style="left:628px;width:71px">电刷架</div><div class="c" style="left:699px;width:106px"><span class="a">2023-08-21 00:00:00</span></div><div class="c r" style="left:805px;width:71px"><span class="a">20000</span></div><div class="c r" style="left:876px;width:71px"><span class="a">0</span></div><div class="c r" style="left:947px;width:71px"><span class="a">0</span></div><div class="c r" style="left:1018px;width:71px"><span class="a">20000</span></div><div class="c r" style="left:1089px;width:71px"><span class="a">0</span></div><div class="c r" style="left:1160px;width:71px"><span class="a">0</span></div><div class="c" style="left:1231px;width:71px"><span class="a">LXX0066</span></div><div class="c" style="left:1302px;width:118px"><span class="a">AgPd30/C7701</span></div></div><div class="row" style="top:667px"><div class="c" style="left:11px;width:70px"><span class="a">20</span></div><div class="c" style="left:81px;width:71px"><span class="a">2023-08-21</span></div><div class="c" style="left:152px;width:143px"><span class="a">SFL230821001</span></div><div class="c" style="left:295px;width:120px">开合直流电机组件</div><div class="c" style="left:415px;width:71px">原材料</div><div class="c" style="left:486px;width:71px"><span class="a">DZX-016</span></div><div class="c" style="left:557px;width:71px"><span class="a">PCS</span></div><div class="c" style="left:628px;width:71px">端子线</div><div class="c" style="left:699px;width:106px"><span class="a">2023-08-21 00:00:00</span></div><div class="c r" style="left:805px;width:71px"><span class="a">800</span></div><div class="c r" style="left:876px;width:71px"><span class="a">0</span></div><div class="c r" style="left:947px;width:71px"><span class="a">0</span></div><div class="c r" style="left:1018px;width:71px"><span class="a">800</span></div><div class="c r" style="left:1089px;width:71px"><span class="a">0</span></div><div class="c r" style="left:1160px;width:71px"><span class="a">0</span></div><div class="c" style="left:1231px;width:71px"><span class="a">LXX0066</span></div><div class="c" style="left:1302px;width:118px">万和<span class="a"> L=450mm</span></div></div><div class="row" style="top:691px"><div class="c" style="left:11px;width:70px"><span class="a">21</span></div><div class="c" style="left:81px;width:71px"><span class="a">2023-08-21</span></div><div class="c" style="left:152px;width:143px"><span class="a">SFL230821001</span></div><div class="c" style="left:295px;width:120px">开合直流电机组件</div><div class="c" style="left:415px;width:71px">原材料</div><div class="c" style="left:486px;width:71px"><span class="a">LD-002</span></div><div class="c" style="left:557px;width:71px"><span class="a">PCS</span></div><div class="c" style="left:628px;width:71px">石墨料带</div><div class="c" style="left:699px;width:106px"><span class="a">2023-08-21 00:00:00</span></div><div class="c r" style="left:805px;width:71px"><span class="a">2396</span></div><div class="c r" style="left:876px;width:71px"><span class="a">0</span></div><div class="c r" style="left:947px;width:71px"><span class="a">0</span></div><div class="c r" style="left:1018px;width:71px"><span class="a">2396</span></div><div class="c r" style="left:1089px;width:71px"><span class="a">0</span></div><div class="c r" style="left:1160px;width:71px"><span class="a">0</span></div><div class="c" style="left:1231px;width:71px"><span class="a">LXX0066</span></div><div class="c" style="left:1302px;width:118px"><span class="a">0.5*7mm</span></div></div><div class="row" style="top:715px"><div class="c" style="left:11px;width:70px"><span class="a">22</span></div><div class="c" style="left:81px;width:71px"><span class="a">2023-08-21</span></div><div class="c" style="left:152px;width:143px"><span class="a">SFL230821001</span></div><div class="c" style="left:295px;width:120px">开合直流电机组件</div><div class="c" style="left:415px;width:71px">原材料</div><div class="c" style="left:486px;width:71px"><span class="a">LG-003</span></div><div class="c" style="left:557px;width:71px"><span class="a">PCS</span></div><div class="c" style="left:628px;width:71px">连杆</div><div class="c" style="left:699px;width:106px"><span class="a">2023-08-21 00:00:00</span></div><div class="c r" style="left:805px;width:71px"><span class="a">2396</span></div><div class="c r" style="left:876px;width:71px"><span class="a">0</span></div><div class="c r" style="left:947px;width:71px"><span class="a">0</span></div><div class="c r" style="left:1018px;width:71px"><span class="a">2396</span></div><div class="c r" style="left:1089px;width:71px"><span class="a">0</span></div><div class="c r" style="left:1160px;width:71px"><span class="a">0</span></div><div class="c" style="left:1231px;width:71px"><span class="a">LXX0066</span></div><div class="c" style="left:1302px;width:118px"><span class="a">144*2</span></div></div></div>
<div id="hs"><div class="bar"></div><div class="arr"></div></div>
</body></html>
